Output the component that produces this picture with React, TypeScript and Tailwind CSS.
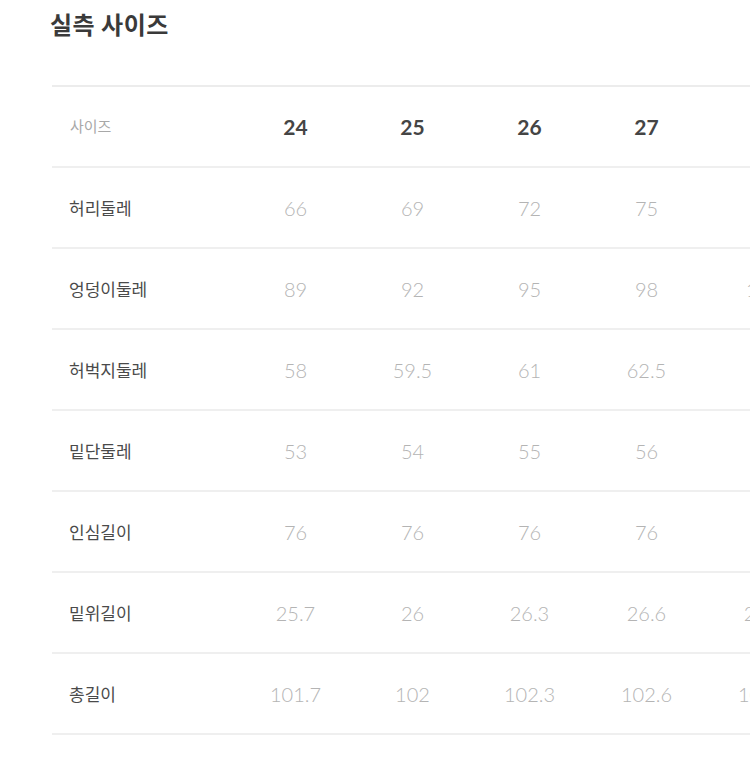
const sizes = ['24', '25', '26', '27', '28'];

const rows: { label: string; values: string[] }[] = [
  { label: '허리둘레', values: ['66', '69', '72', '75', '78'] },
  { label: '엉덩이둘레', values: ['89', '92', '95', '98', '101'] },
  { label: '허벅지둘레', values: ['58', '59.5', '61', '62.5', '64'] },
  { label: '밑단둘레', values: ['53', '54', '55', '56', '57'] },
  { label: '인심길이', values: ['76', '76', '76', '76', '76'] },
  { label: '밑위길이', values: ['25.7', '26', '26.3', '26.6', '26.9'] },
  { label: '총길이', values: ['101.7', '102', '102.3', '102.6', '102.9'] },
];

const kr = "font-['Noto_Sans_CJK_KR','Noto_Sans',sans-serif]";

export default function App() {
  return (
    <main className="w-[750px] h-[759px] overflow-hidden bg-white">
      <h1 className={`${kr} pl-[50px] pt-[8px] text-[24px] font-bold tracking-[0.5px] text-[#3a3a3a] leading-[32px]`}>
        실측 사이즈
      </h1>

      <div className="ml-[52px] mt-[45px] w-[900px] border-t-2 border-[#ececec]">
        <div className="flex h-[81px] items-center border-b-2 border-[#efefef]">
          <div className={`${kr} w-[185px] pl-[18px] text-[15px] text-[#a8a8a8]`}>사이즈</div>
          {sizes.map((s) => (
            <div
              key={s}
              className="w-[117px] text-center font-['Lato',sans-serif] text-[21px] font-bold text-[#454545]"
            >
              {s}
            </div>
          ))}
        </div>
        {rows.map((r) => (
          <div key={r.label} className="flex h-[81px] items-center border-b-2 border-[#efefef]">
            <div className={`${kr} w-[185px] pl-[17px] text-[17px] text-[#4a4a4a]`}>{r.label}</div>
            {r.values.map((v, i) => (
              <div
                key={i}
                className="w-[117px] text-center font-['Lato',sans-serif] text-[20px] font-light text-[#b4b4b4]"
              >
                {v}
              </div>
            ))}
          </div>
        ))}
      </div>
    </main>
  );
}
